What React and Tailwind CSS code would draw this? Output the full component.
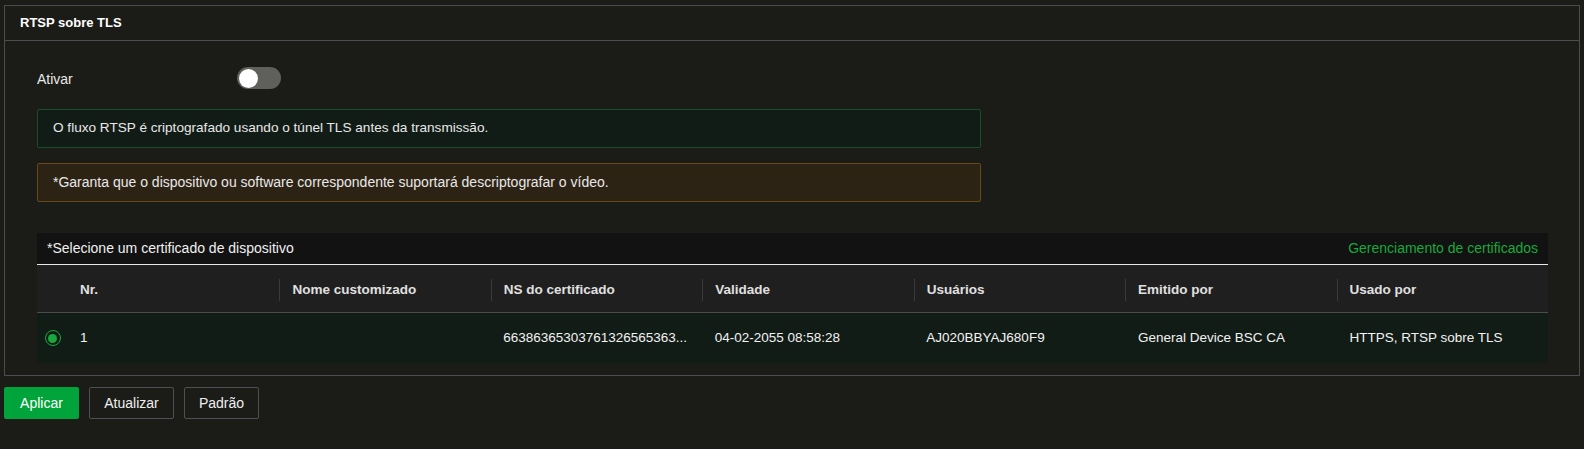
import React from "react";

const cols = [
  { h: "Nr.", v: "1" },
  { h: "Nome customizado", v: "" },
  { h: "NS do certificado", v: "66386365303761326565363..." },
  { h: "Validade", v: "04-02-2055 08:58:28" },
  { h: "Usuários", v: "AJ020BBYAJ680F9" },
  { h: "Emitido por", v: "General Device BSC CA" },
  { h: "Usado por", v: "HTTPS, RTSP sobre TLS" },
];

export default function App() {
  return (
    <div
      className="min-h-[449px] bg-[#1b1c17] px-1 pt-[5px] text-[14px] text-[#e8e8e8]"
      style={{ fontFamily: '"Liberation Sans", Arial, sans-serif' }}
    >
      <div className="border border-[#4a4c50]">
        <div className="flex h-[35px] items-center border-b border-[#4a4c50] pl-[15px] text-[13px] font-bold text-white">
          RTSP sobre TLS
        </div>
        <div className="pl-[32px] pr-[31px] pt-[26px] pb-[12px]">
          <div className="flex h-[22px] items-center">
            <div className="w-[200px] pt-[2px]">Ativar</div>
            <div className="relative h-[22px] w-[44px] rounded-full bg-[#5f605b]">
              <div className="absolute left-[1.5px] top-[1.5px] h-[19px] w-[19px] rounded-full bg-white" />
            </div>
          </div>
          <div className="mt-[20px] flex h-[39px] w-[944px] items-center rounded-[2px] border border-[#1b4d2b] bg-[#121c16] pl-[15px] text-[13.6px]">
            O fluxo RTSP é criptografado usando o túnel TLS antes da transmissão.
          </div>
          <div className="mt-[15px] flex h-[39px] w-[944px] items-center rounded-[2px] border border-[#674816] bg-[#2d2314] pl-[15px]">
            *Garanta que o dispositivo ou software correspondente suportará descriptografar o vídeo.
          </div>
          <div className="mt-[31px]">
            <div className="flex h-[32px] items-center justify-between border-b-[1.5px] border-[#e8e8e8] bg-[#121212] pl-[10px] pr-[10px] text-[#f0f0f0]">
              <span>*Selecione um certificado de dispositivo</span>
              <span className="text-[#17a93b]">Gerenciamento de certificados</span>
            </div>
            <div className="flex h-[48px] items-center border-b border-[#4a4c50] bg-[#1f1f1f] pt-[3px] text-[13.5px] font-bold text-[#e0e0e0]">
              <div className="w-[31px] shrink-0" />
              {cols.map((c, i) => (
                <div key={c.h} className="flex h-full min-w-0 flex-1 items-center">
                  {i > 0 && <div className="h-[22px] w-px bg-[#3a3a3a]" />}
                  <div className="pl-[12px]">{c.h}</div>
                </div>
              ))}
            </div>
            <div className="flex h-[50px] items-center bg-[#121c16] text-[13.5px] text-[#f2f2f2]">
              <div className="flex w-[31px] shrink-0 items-center justify-center">
                <div className="flex h-[16px] w-[16px] items-center justify-center rounded-full border-[1.5px] border-[#17a93b]">
                  <div className="h-[9px] w-[9px] rounded-full bg-[#17a93b]" />
                </div>
              </div>
              {cols.map((c, i) => (
                <div
                  key={c.h}
                  className={
                    i > 0
                      ? "min-w-0 flex-1 overflow-hidden whitespace-nowrap pl-[13px] pr-[12px]"
                      : "min-w-0 flex-1 overflow-hidden whitespace-nowrap pl-[12px] pr-[12px]"
                  }
                >
                  {c.v}
                </div>
              ))}
            </div>
          </div>
        </div>
      </div>
      <div className="mt-[11px] flex gap-[10px]">
        <button className="flex h-[32px] w-[75px] items-center justify-center rounded-[2px] bg-[#00a43a] text-white">
          Aplicar
        </button>
        <button className="flex h-[32px] w-[85px] items-center justify-center rounded-[2px] border border-[#4e4f52] text-[#f0f0f0]">
          Atualizar
        </button>
        <button className="flex h-[32px] w-[75px] items-center justify-center rounded-[2px] border border-[#4e4f52] text-[#f0f0f0]">
          Padrão
        </button>
      </div>
    </div>
  );
}
